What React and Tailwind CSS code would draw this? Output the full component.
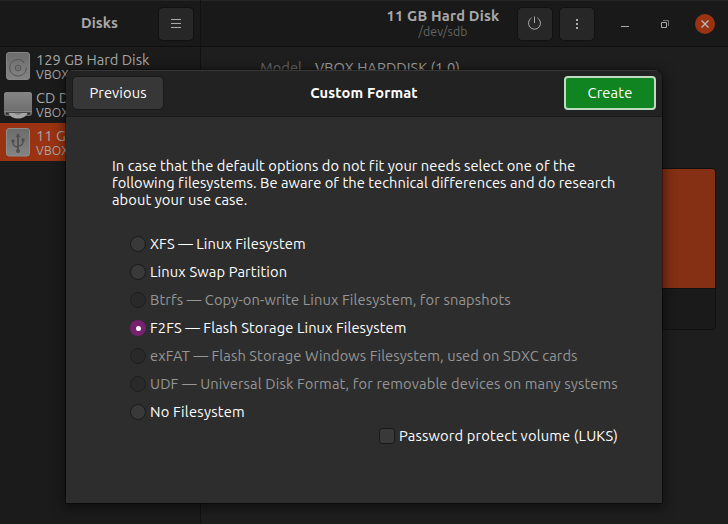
const font = "font-['Ubuntu','Noto_Sans',sans-serif]";

function HardDiskIcon() {
  return (
    <svg className="block h-[32px] w-[32px]" viewBox="0 0 32 32" fill="none">
      <defs>
        <linearGradient id="metal" x1="0" y1="0" x2="0" y2="1">
          <stop offset="0" stopColor="#6c6c6c" />
          <stop offset="1" stopColor="#848484" />
        </linearGradient>
      </defs>
      <rect x="4.500" y="2.500" width="23" height="27" rx="2.500" fill="url(#metal)" stroke="#868686" />
      <path d="M22 12A8.300 8.300 0 1 0 24.300 17.500M20 10.500A8.300 8.300 0 0 1 22.500 13" stroke="#545454" strokeWidth="1" />
      <circle cx="16" cy="18" r="2.800" stroke="#545454" />
      <circle cx="16" cy="18" r=".8" fill="#545454" />
    </svg>
  );
}

function OpticalIcon() {
  return (
    <svg className="block h-[32px] w-[32px]" viewBox="0 0 32 32" fill="none">
      <defs>
        <linearGradient id="tray" x1="0" y1="0" x2="0" y2="1">
          <stop offset="0" stopColor="#858585" />
          <stop offset="1" stopColor="#6e6e6e" />
        </linearGradient>
      </defs>
      <rect x="2" y="4" width="28" height="24" rx="3" fill="#6c6c6c" />
      <path d="M2 7Q2 4 5 4H27Q30 4 30 7V23H2Z" fill="url(#tray)" />
      <path d="M2 23.500H30" stroke="#858585" />
      <path d="M4 24.500H28V26.500H4Z" fill="#2b2b2b" />
      <path d="M6.500 25H25.500C24 29 20 30.500 16 30.500S8 29 6.500 25Z" fill="#a6a6a6" />
      <path d="M12 25H20Q18.500 27 16 27T12 25Z" fill="#858585" />
    </svg>
  );
}

function UsbDriveIcon() {
  return (
    <svg className="block h-[32px] w-[32px]" viewBox="0 0 32 32" fill="none">
      <rect x="4.500" y="2.500" width="23" height="27.500" rx="2.500" fill="url(#metal)" stroke="#8c8c8c" />
      <path d="M16 10V25" stroke="#505050" strokeWidth="1.800" />
      <path d="M11 15V17Q11 20 16 21.500M21 14V16Q21 19.500 16 20" stroke="#505050" strokeWidth="1.500" />
      <path d="M13.500 11L16 7L18.500 11Z" fill="#505050" />
      <circle cx="11" cy="15" r="1.700" fill="#505050" />
      <rect x="19.500" y="12.500" width="3" height="3" fill="#505050" />
      <circle cx="16" cy="25" r="2" fill="#505050" />
    </svg>
  );
}

const drives = [
  { name: "129 GB Hard Disk", Icon: HardDiskIcon, selected: false },
  { name: "CD Drive", Icon: OpticalIcon, selected: false },
  { name: "11 GB Hard Disk", Icon: UsbDriveIcon, selected: true },
];

const filesystems = [
  { label: "XFS — Linux Filesystem", tracking: "tracking-[0.09px]" },
  { label: "Linux Swap Partition", tracking: "tracking-[0.15px]" },
  { label: "Btrfs — Copy-on-write Linux Filesystem, for snapshots", tracking: "tracking-[0.12px]", disabled: true },
  { label: "F2FS — Flash Storage Linux Filesystem", tracking: "tracking-[0.1px]", checked: true },
  { label: "exFAT — Flash Storage Windows Filesystem, used on SDXC cards", tracking: "tracking-[0.09px]", disabled: true },
  { label: "UDF — Universal Disk Format, for removable devices on many systems", tracking: "tracking-[0.13px]", disabled: true },
  { label: "No Filesystem", tracking: "tracking-[0.24px]" },
];

const headerButton =
  "flex h-[34px] w-[36px] items-center justify-center rounded-[5px] border border-[#111] bg-[#272727]";

function Sidebar() {
  return (
    <aside className="flex w-[201px] shrink-0 flex-col border-r border-[#111] bg-[#1b1b1b]">
      <header className="flex h-[47px] shrink-0 items-center border-b border-t border-b-[#101010] border-t-[#252525] bg-[#191919]">
        <h1 className="ml-[81px] w-[77px] pb-[2px] text-[14.667px] font-bold leading-[18px] text-[#a8a8a8]">Disks</h1>
        <button className={headerButton}>
          <svg className="h-[16px] w-[16px]" viewBox="0 0 16 16" stroke="#aaa">
            <path d="M3 3.500H13M3 7.500H13M3 11.500H13" />
          </svg>
        </button>
      </header>
      <ul>
        {drives.map(({ name, Icon, selected }) => (
          <li key={name} className={selected ? "flex h-[38px] items-center bg-[#9a3311] pl-[2px]" : "flex h-[38px] items-center pl-[2px]"}>
            <Icon />
            <div className="ml-[2px] whitespace-nowrap text-[#a8a8a8]">
              <div className="text-[14.667px] leading-[17px] tracking-[0px]">{name}</div>
              <div className="text-[12.22px] leading-[14px] tracking-[0.15px]">VBOX HARDDISK</div>
            </div>
          </li>
        ))}
      </ul>
    </aside>
  );
}

function DiskView() {
  return (
    <main className="flex min-w-0 flex-1 flex-col">
      <header className="flex h-[47px] shrink-0 items-center border-b border-t border-b-[#101010] border-t-[#252525] bg-[#191919]">
        <div className="ml-[182px] w-[120px] whitespace-nowrap text-center">
          <div className="text-[14.667px] font-bold leading-[16px] tracking-[0.2px] text-[#a8a8a8]">11 GB Hard Disk</div>
          <div className="text-[12.22px] leading-[15px] tracking-[0.15px] text-[#656565]">/dev/sdb</div>
        </div>
        <div className="ml-[14px] flex items-center gap-[6px]">
          <button className={headerButton}>
            <svg className="h-[16px] w-[16px]" viewBox="0 0 16 16" fill="none" stroke="#aaa">
              <path d="M7.500 0.500V7M4.500 2A6 6 0 1 0 10.500 2" />
            </svg>
          </button>
          <button className={headerButton}>
            <svg className="h-[16px] w-[16px]" viewBox="0 0 16 16" fill="#aaa">
              <path d="M7 3H9V5H7ZM7 7H9V9H7ZM7 11H9V13H7Z" />
            </svg>
          </button>
        </div>
        <div className="ml-[22px] flex items-center">
          <svg className="h-[16px] w-[16px]" viewBox="0 0 16 16" stroke="#aaa">
            <path d="M4 10.500H12" />
          </svg>
          <svg className="ml-[24px] h-[16px] w-[16px]" viewBox="0 0 16 16" fill="none" stroke="#aaa">
            <path d="M4.500 6.500H9.500V11.500H4.500Z" />
            <path d="M6 4.500H11.500V10" stroke="#777" />
          </svg>
          <svg className="ml-[22px] h-[20px] w-[20px]" viewBox="0 0 20 20">
            <circle cx="10" cy="10" r="10" fill="#9a3311" />
            <path d="M6.500 6.500L13.500 13.500M13.500 6.500L6.500 13.500" stroke="#bbb" strokeWidth="1.300" />
          </svg>
        </div>
      </header>
      <section className="flex flex-1 flex-col bg-[#1e1e1e]">
        <div className="mt-[12px] flex whitespace-nowrap pl-[59px] text-[14.667px] leading-[18px]">
          <span className="w-[55px] text-[#656565]">Model</span>
          <span className="text-[#a0a0a0]">VBOX HARDDISK (1.0)</span>
        </div>
        <div className="ml-[59px] mr-[12px] mt-[91px] flex h-[162px] flex-col overflow-hidden rounded-[4px] border border-[#111]">
          <div className="h-[120px] border-b border-[#111] bg-[#853014]" />
          <div className="flex-1 bg-[#1a1a1a]" />
        </div>
      </section>
    </main>
  );
}

function Radio({ checked, disabled }) {
  if (checked) {
    return (
      <span className="flex h-4 w-4 shrink-0 items-center justify-center rounded-full bg-[#77216f]">
        <span className="h-[5px] w-[5px] rounded-full bg-white" />
      </span>
    );
  }
  return (
    <span
      className={
        disabled
          ? "h-4 w-4 shrink-0 rounded-full border border-[#1f1f1f] bg-[#292929]"
          : "h-4 w-4 shrink-0 rounded-full border border-[#1a1a1a] bg-[#393939]"
      }
    />
  );
}

function FormatDialog() {
  return (
    <div
      role="dialog"
      className="absolute left-[66px] top-[70px] flex h-[433px] w-[596px] flex-col overflow-hidden rounded-t-[8px] bg-[#2d2d2d] text-white shadow-[0_3px_12px_2px_rgba(0,0,0,0.5),0_0_0_1px_rgba(0,0,0,0.3)]"
    >
      <header className="flex h-[47px] shrink-0 items-center justify-between border-b border-t border-b-[#191919] border-t-[#383838] bg-[#222] px-[6px] pb-px">
        <button className="h-[34px] w-[92px] rounded-[5px] border border-[#191919] bg-[#373737] pb-px text-[14.667px] leading-[18px] tracking-[0.1px]">
          Previous
        </button>
        <h2 className="pb-px text-[14.667px] font-bold leading-[18px] tracking-[0.16px]">Custom Format</h2>
        <button className="h-[34px] w-[92px] rounded-[4px] border-2 border-[#bfdcc2] bg-[#0f8420] pb-px text-[14.667px] leading-[18px] tracking-[0.15px]">
          Create
        </button>
      </header>
      <div className="flex flex-col px-[46px] pt-[40px]">
        <p className="whitespace-nowrap text-[14.667px] leading-[17px]">
          <span className="block tracking-[0.05px]">In case that the default options do not fit your needs select one of the</span>
          <span className="block tracking-[0.06px]">following filesystems. Be aware of the technical differences and do research</span>
          <span className="block tracking-[0.09px]">about your use case.</span>
        </p>
        <div className="mt-[22px] flex flex-col pl-[18px]">
          {filesystems.map(({ label, tracking, checked, disabled }) => (
            <label key={label} className="flex h-[28px] items-center gap-[4px]">
              <Radio checked={checked} disabled={disabled} />
              <span className={"whitespace-nowrap text-[14.667px] leading-[18px] " + tracking + (disabled ? " text-[#969696]" : "")}>
                {label}
              </span>
            </label>
          ))}
        </div>
        <label className="ml-[267px] mt-px flex items-center gap-[4px]">
          <span className="h-4 w-4 shrink-0 rounded-[3px] border border-[#1a1a1a] bg-[#393939]" />
          <span className="whitespace-nowrap text-[14.667px] leading-[18px] tracking-[0.17px]">Password protect volume (LUKS)</span>
        </label>
      </div>
    </div>
  );
}

export default function App() {
  return (
    <div className={"relative flex h-[524px] w-[728px] overflow-hidden bg-[#1e1e1e] " + font}>
      <Sidebar />
      <DiskView />
      <FormatDialog />
    </div>
  );
}
